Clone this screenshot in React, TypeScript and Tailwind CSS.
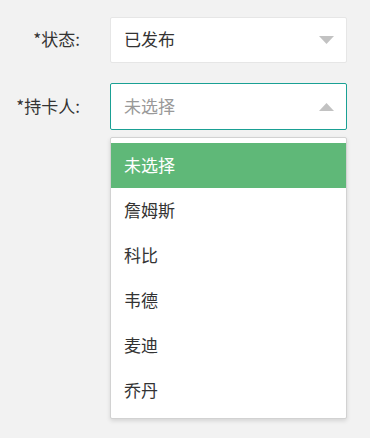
const Caret = ({ up }: { up?: boolean }) => (
  <svg aria-hidden viewBox="0 0 15 8" className="h-[8px] w-[15px]" fill="#c2c2c2">
    {up ? <path d="M0 8 L7.5 0 L15 8 Z" /> : <path d="M0 0 L15 0 L7.5 8 Z" />}
  </svg>
);

const people = ['未选择', '詹姆斯', '科比', '韦德', '麦迪', '乔丹'];

export default function App() {
  return (
    <div
      className="min-h-[438px] bg-[#f2f2f2] pt-[17px] text-[17px] text-[#333]"
      style={{ fontFamily: '"Noto Sans CJK SC", "Noto Sans", sans-serif' }}
    >
      <div className="flex items-center">
        <label className="w-[110px] pb-[2px] pr-[30px] text-right text-[#333]">*状态:</label>
        <div className="flex h-[46px] w-[237px] items-center justify-between rounded-[2px] border border-[#e6e6e6] bg-white pl-[13px] pr-[12px]">
          <span className="pb-[2px]">已发布</span>
          <Caret />
        </div>
      </div>

      <div className="mt-[20px] flex items-center">
        <label className="w-[110px] pb-[2px] pr-[30px] text-right text-[#333]">*持卡人:</label>
        <div className="relative w-[237px]">
          <div className="flex h-[47px] items-center justify-between rounded-[2px] border border-[#1aa094] bg-white pl-[13px] pr-[12px]">
            <span className="pb-[2px] text-[#999]">未选择</span>
            <Caret up />
          </div>
          <ul className="absolute left-0 top-[54px] w-full rounded-[2px] border border-[#d2d2d2] bg-white py-[5px] shadow-[0_2px_4px_rgba(0,0,0,0.12)]">
            {people.map((p, i) => (
              <li
                key={p}
                className={
                  i === 0
                    ? 'flex h-[45px] items-center bg-[#5fb878] pb-[2px] pl-[13px] text-white'
                    : 'flex h-[45px] items-center pb-[2px] pl-[13px]'
                }
              >
                {p}
              </li>
            ))}
          </ul>
        </div>
      </div>
    </div>
  );
}
